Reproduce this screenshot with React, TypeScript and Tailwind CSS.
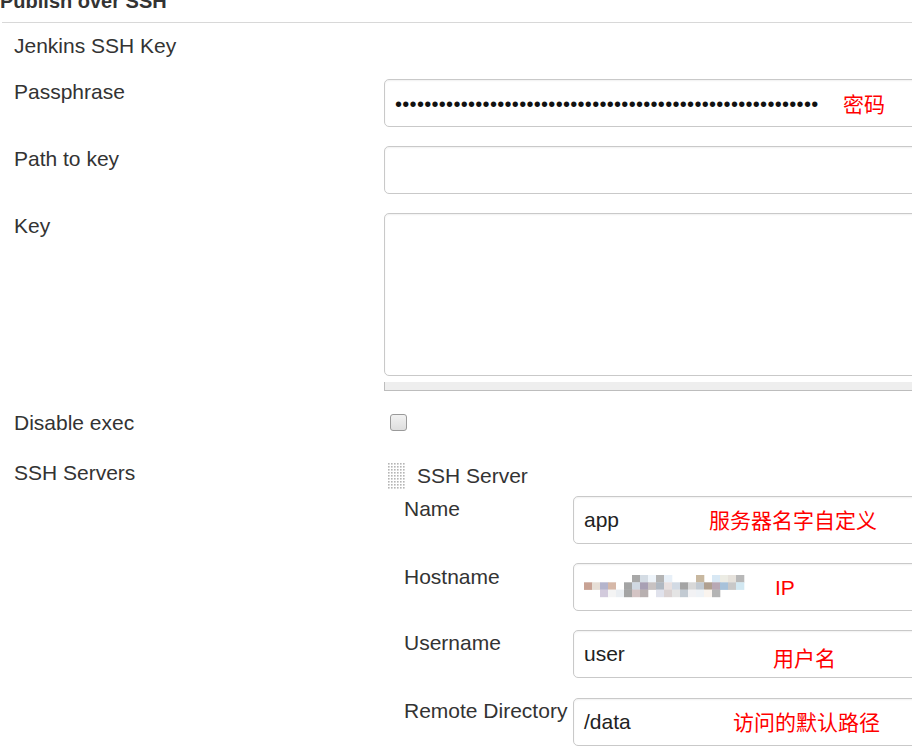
import React from 'react';

const font = { fontFamily: '"Liberation Sans", Arial, sans-serif' };
const cjk = { fontFamily: '"Liberation Sans", "Noto Sans CJK SC", sans-serif' };

function Field({ children, className = '' }: { children?: React.ReactNode; className?: string }) {
  return (
    <div
      className={`relative h-[48px] w-[600px] shrink-0 rounded-[5px] border border-[#c9c9c9] bg-white shadow-[inset_0_1px_2px_rgba(0,0,0,0.06)] flex items-center pl-[10px] text-[21px] text-[#222] ${className}`}
    >
      {children}
    </div>
  );
}

function Note({ left, top = 0, children }: { left: number; top?: number; children: React.ReactNode }) {
  return (
    <span
      className="absolute text-[21px] leading-[48px] text-[#ff0000]"
      style={{ ...cjk, left, top }}
    >
      {children}
    </span>
  );
}

// pixelated blur over the hostname
const mosaic: string[][] = [
  ['', '', '', '', '', '', '#a8a8a8', '#d4dce4', '#eef4fa', '#b4b4b4', '#e8f0f8', '', '', '', '#c8b8a0', '', '#d8e8f4', '#ecece4', '#e6e2dc', '#b8b8b8', '', ''],
  ['#c8a294', '#e6ded6', '#b4b4cc', '#d6b8a8', '#ffffff', '#a4a4a4', '#d0d8e2', '#a8a0b4', '#c8c2c2', '#b0b8c2', '#e8e0e0', '#d2dae4', '#a4a4a4', '#d8d8d8', '#c2cad2', '#b0a090', '#b8a8b4', '#a8c2da', '#c8c8c8', '#d2e8f2', '', ''],
  ['', '', '#d2cadc', '#f4f4f4', '#eaeef2', '#a4a4a4', '#d4c4c4', '#b8b0b0', '', '#e0e2ec', '#dad2d2', '#e4e4e4', '#c2cad2', '#f2f2f4', '#eef2f6', '#faf4ee', '#b4b4b4', '', '', '', '', ''],
];

function Mosaic() {
  const s = 8;
  return (
    <svg width={176} height={24} className="block">
      {mosaic.map((row, r) =>
        row.map((c, i) => (c ? <rect key={`${r}-${i}`} x={i * s} y={r * 7.3} width={s + 0.3} height={7.6} fill={c} /> : null))
      )}
    </svg>
  );
}

function Handle() {
  const dots = [];
  for (let r = 0; r < 9; r++) {
    for (let c = 0; c < 6; c++) {
      dots.push(<rect key={`${r}-${c}`} x={c * 3} y={r * 3} width={1.6} height={1.6} fill="#b5b5b5" />);
    }
  }
  return (
    <svg width={17} height={26} className="block">
      {dots}
    </svg>
  );
}

export default function App() {
  return (
    <div className="w-[912px] h-[748px] overflow-hidden bg-white text-[#333]" style={font}>
      {/* section title, top is cut off */}
      <div className="h-[22px] overflow-hidden">
        <div className="-mt-[11px] text-[20px] font-bold leading-[24px] text-[#333]">Publish over SSH</div>
      </div>
      <div className="ml-[2px] h-[1px] bg-[#d8d8d8]" />

      <div className="pl-[14px] pt-[11px] text-[21px] leading-[24px]">Jenkins SSH Key</div>

      {/* Passphrase */}
      <div className="mt-[21px] flex">
        <div className="w-[384px] shrink-0 pl-[14px] pt-[1px] text-[21px] leading-[24px]">Passphrase</div>
        <Field>
          <span className="text-[20px] leading-none text-[#111] tracking-[0.3px] mt-[1px]">
            {'•'.repeat(58)}
          </span>
          <Note left={458} top={1}>密码</Note>
        </Field>
      </div>

      {/* Path to key */}
      <div className="mt-[19px] flex">
        <div className="w-[384px] shrink-0 pl-[14px] pt-[1px] text-[21px] leading-[24px]">Path to key</div>
        <Field />
      </div>

      {/* Key */}
      <div className="mt-[19px] flex">
        <div className="w-[384px] shrink-0 pl-[14px] pt-[1px] text-[21px] leading-[24px]">Key</div>
        <div className="flex flex-col">
          <div className="h-[163px] w-[600px] rounded-[5px] border border-[#c9c9c9] bg-white shadow-[inset_0_1px_2px_rgba(0,0,0,0.06)]" />
          <div className="mt-[6px] h-[9px] w-[600px] border-l border-b border-[#bdbdbd] bg-[#eeeeee]" />
        </div>
      </div>

      {/* Disable exec */}
      <div className="mt-[19px] flex">
        <div className="w-[384px] shrink-0 pl-[14px] pt-[1px] text-[21px] leading-[24px]">Disable exec</div>
        <div className="pl-[6px] pt-[4px]">
          <div className="h-[17px] w-[17px] rounded-[3px] border border-[#9a9a9a] bg-gradient-to-b from-[#f2f2f2] to-[#dedede]" />
        </div>
      </div>

      {/* SSH Servers */}
      <div className="mt-[25px] flex">
        <div className="w-[384px] shrink-0 pl-[14px] pt-[1px] text-[21px] leading-[24px]">SSH Servers</div>
        <div className="flex flex-col">
          <div className="flex items-center pl-[4px] pt-[3px]">
            <Handle />
            <span className="ml-[12px] text-[21px] leading-[24px]">SSH Server</span>
          </div>

          <div className="mt-[7px] flex flex-col pl-[20px]">
            <div className="flex">
              <div className="w-[169px] shrink-0 pt-[1px] text-[21px] leading-[24px]">Name</div>
              <Field>
                app
                <Note left={135}>服务器名字自定义</Note>
              </Field>
            </div>
            <div className="mt-[19px] flex">
              <div className="w-[169px] shrink-0 pt-[2px] text-[21px] leading-[24px]">Hostname</div>
              <Field className="pl-[8px]">
                <Mosaic />
                <Note left={201}>IP</Note>
              </Field>
            </div>
            <div className="mt-[19px] flex">
              <div className="w-[169px] shrink-0 pt-[1px] text-[21px] leading-[24px]">Username</div>
              <Field>
                <span>user</span>
                <Note left={199} top={4}>用户名</Note>
              </Field>
            </div>
            <div className="mt-[20px] flex">
              <div className="w-[169px] shrink-0 pt-[1px] text-[21px] leading-[24px]">Remote Directory</div>
              <Field>
                /data
                <Note left={159}>访问的默认路径</Note>
              </Field>
            </div>
          </div>
        </div>
      </div>
    </div>
  );
}
